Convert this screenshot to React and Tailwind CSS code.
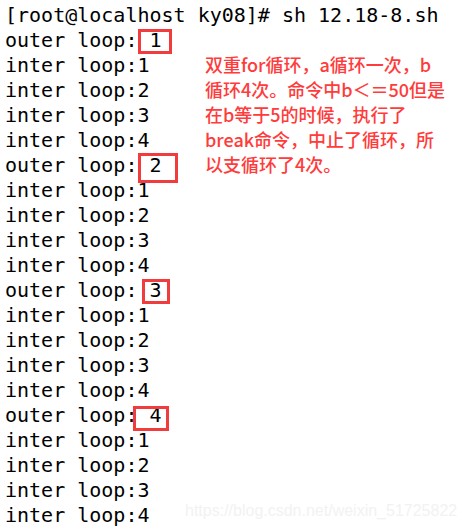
import React from "react";

const loops = [
  "outer loop: 1",
  "inter loop:1",
  "inter loop:2",
  "inter loop:3",
  "inter loop:4",
  "outer loop: 2",
  "inter loop:1",
  "inter loop:2",
  "inter loop:3",
  "inter loop:4",
  "outer loop: 3",
  "inter loop:1",
  "inter loop:2",
  "inter loop:3",
  "inter loop:4",
  "outer loop: 4",
  "inter loop:1",
  "inter loop:2",
  "inter loop:3",
  "inter loop:4",
];

const note = [
  "双重for循环，a循环一次，b",
  "循环4次。命令中b＜＝50但是",
  "在b等于5的时候，执行了",
  "break命令，中止了循环，所",
  "以支循环了4次。",
];

const mono = { fontFamily: '"DejaVu Sans Mono", "Liberation Mono", monospace' };

export default function App() {
  return (
    <div className="relative w-[466px] h-[529px] bg-white overflow-hidden">
      <div className="flex flex-col pl-[5px] pt-[3px] text-[20px] text-black whitespace-pre" style={mono}>
        <div className="h-[25px] leading-[25px]">[root@localhost ky08]# sh 12.18-8.sh</div>
        <div className="flex">
          <div className="flex flex-col w-[200px]">
            {loops.map((line, i) => (
              <div key={i} className="h-[25px] leading-[25px]">
                {line}
              </div>
            ))}
          </div>
          <div
            className="pt-[24px] text-[18px] leading-[25px] text-[#ff3b3b] font-medium"
            style={{ fontFamily: '"Noto Sans CJK SC", "Noto Sans", sans-serif' }}
          >
            {note.map((t, i) => (
              <div key={i}>{t}</div>
            ))}
          </div>
        </div>
      </div>

      {/* red highlight boxes */}
      <div className="absolute left-[138px] top-[29px] w-[34px] h-[25px] border-[3px] border-[#f03c3c]" />
      <div className="absolute left-[138px] top-[153px] w-[40px] h-[30px] border-[3px] border-[#f03c3c]" />
      <div className="absolute left-[142px] top-[279px] w-[28px] h-[25px] border-[3px] border-[#f03c3c]" />
      <div className="absolute left-[133px] top-[406px] w-[36px] h-[25px] border-[3px] border-[#f03c3c]" />

      {/* watermark */}
      <div
        className="absolute left-[185px] top-[501px] text-[16px] leading-[20px] text-[#f2f2f2] whitespace-nowrap"
        style={{ fontFamily: '"Liberation Sans", Arial, sans-serif' }}
      >
        https://blog.csdn.net/weixin_51725822
      </div>
    </div>
  );
}
